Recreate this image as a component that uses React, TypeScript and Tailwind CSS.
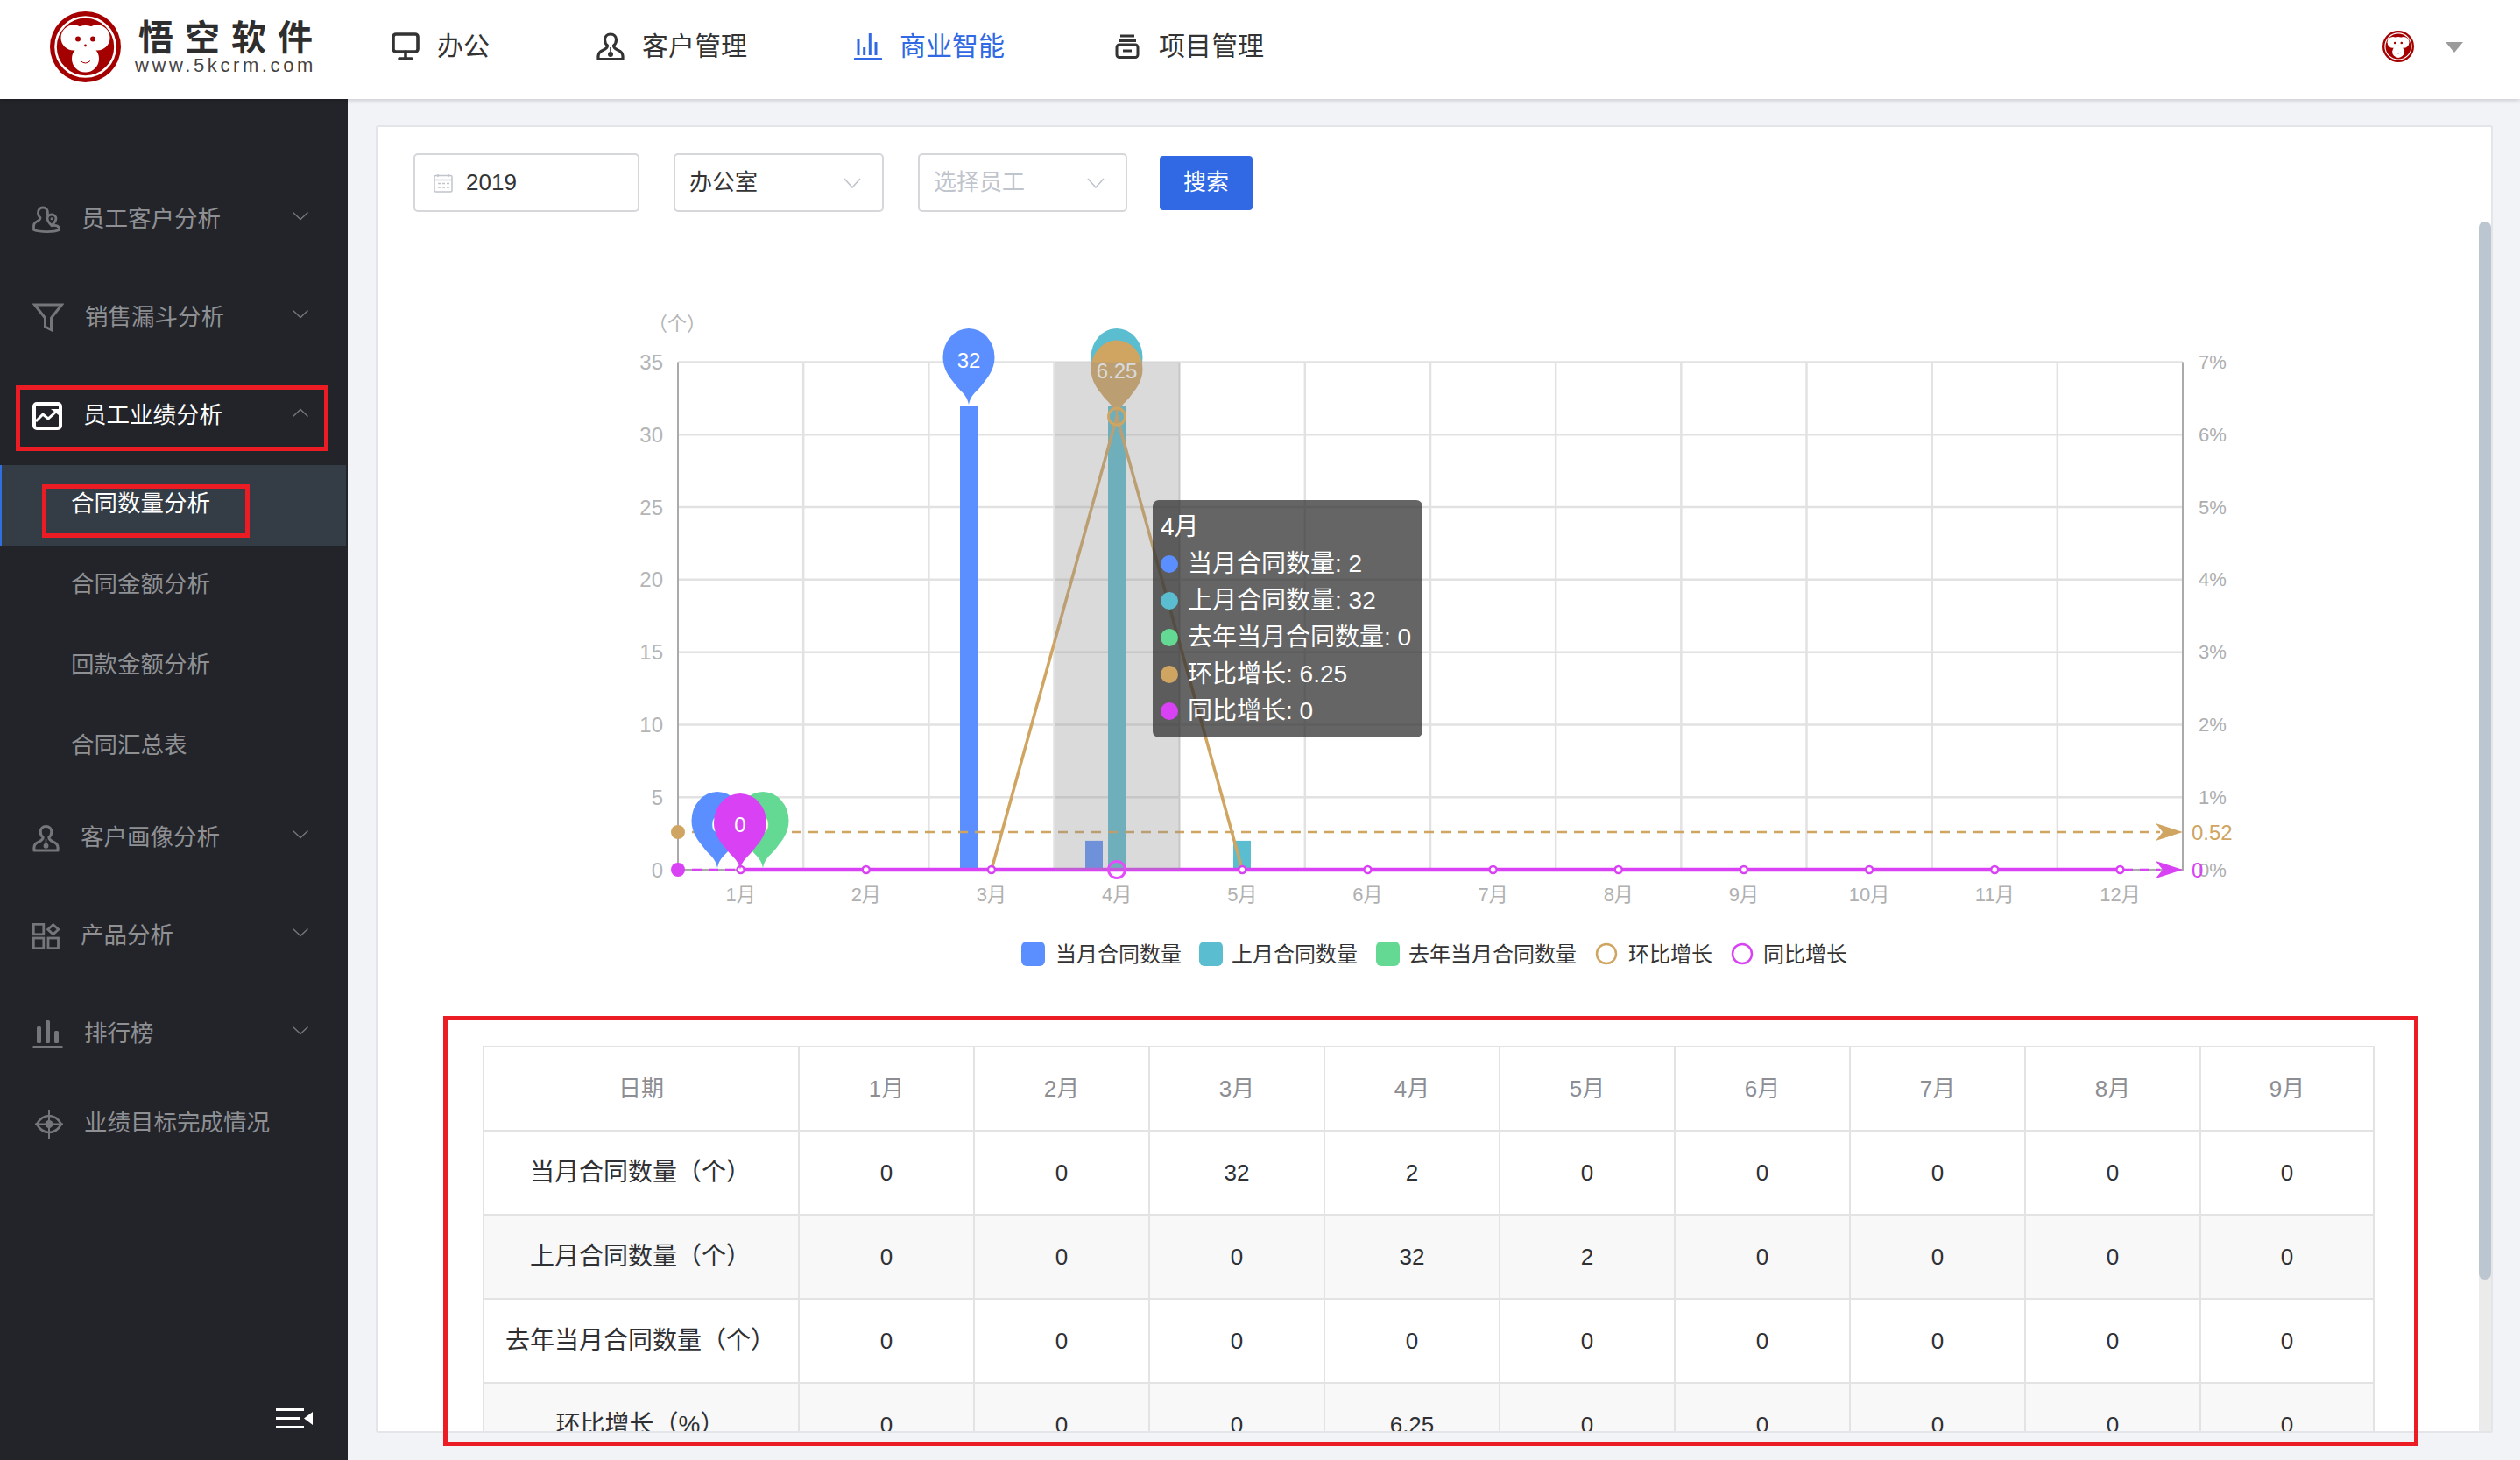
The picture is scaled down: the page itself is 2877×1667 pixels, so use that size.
import React from "react";

const months = ["1月","2月","3月","4月","5月","6月","7月","8月","9月","10月","11月","12月"];
const X0 = 774, X1 = 2492, Y0 = 993, YT = 413.5;
const CW = (X1 - X0) / 12;
const UH = (Y0 - YT) / 7;
const cx = (i: number) => X0 + CW * (i + 0.5);

function pinPath(x: number, y: number, w = 59) {
  const r = w / 2;
  return `M${x} ${y}C${x - 2} ${y - 12} ${x - 10} ${y - 15} ${x - 17} ${y - 25}C${x - r + 8} ${y - 31} ${x - r} ${y - 40} ${x - r} ${y - 54}A${r} 33 0 1 1 ${x + r} ${y - 54}C${x + r} ${y - 40} ${x + r - 8} ${y - 31} ${x + 17} ${y - 25}C${x + 10} ${y - 15} ${x + 2} ${y - 12} ${x} ${y}Z`;
}

const Monkey = ({ className }: { className: string }) => (
  <svg viewBox="0 0 81 81" className={className}>
    <circle cx="40.5" cy="40.5" r="40.5" fill="#a50000" />
    <circle cx="40.5" cy="40.5" r="34" fill="none" stroke="#fff" strokeWidth="2.6" />
    <circle cx="27" cy="30" r="14.5" fill="#fff" />
    <circle cx="54" cy="30" r="14.5" fill="#fff" />
    <ellipse cx="40.5" cy="30" rx="16" ry="14" fill="#fff" />
    <circle cx="40.5" cy="54" r="15.5" fill="#fff" />
    <circle cx="32" cy="31.5" r="3" fill="#a50000" />
    <circle cx="49" cy="31.5" r="3" fill="#a50000" />
    <circle cx="40.5" cy="39" r="1.4" fill="#a50000" />
    <path d="M35 56.5Q40.5 61.5 46 56.5" fill="none" stroke="#a50000" strokeWidth="1" />
  </svg>
);

const PersonIcon = ({ className, color }: { className: string; color: string }) => (
  <svg viewBox="0 0 32 32" className={className} fill="none" stroke={color} strokeWidth="3.2" strokeLinejoin="round">
    <path d="M16 2c-4 0-6.500 3-6.500 6.500 0 2.800 1 5 3 6.500 0 2.500-1.500 3.700-5 5.200C4 21.700 2 24 2 27v3.500h28V27c0-3-2-5.300-5.500-6.800-3.500-1.500-5-2.700-5-5.200 2-1.500 3-3.700 3-6.500C22.500 5 20 2 16 2z" />
    <path d="M16 17v5" strokeWidth="1.6" />
    <circle cx="16" cy="25" r="3" fill={color} stroke="none" />
  </svg>
);

const UserPinIcon = ({ className }: { className: string }) => (
  <svg viewBox="0 0 32 32" className={className} fill="none" stroke="#75767a" strokeWidth="2.800" strokeLinejoin="round">
    <path d="M12 2c-3.500 0-5.500 2.700-5.500 6 0 2.500 1 4.400 2.500 5.600 0 2.200-1.200 3.200-4 4.400C2.500 19.200 1.500 21 1.500 23v4.500C8 30 24 30.500 30.500 27.500V25c-1-2-4-3-8-2.500" />
    <path d="M12 2c3.500 0 5.500 2.700 5.500 6 0 1.500-.4 2.800-1 3.800" />
    <path d="M22 10c-3 0-5 2.200-5 4.800 0 3 3 5.200 5 8 2-2.800 5-5 5-8C27 12.200 25 10 22 10z" />
    <circle cx="22" cy="14.800" r="1.500" fill="#75767a" stroke="none" />
  </svg>
);

const FunnelIcon = ({ className }: { className: string }) => (
  <svg viewBox="0 0 36 34" className={className} fill="none" stroke="#75767a" strokeWidth="3" strokeLinejoin="miter">
    <path d="M2.500 2h31L21.500 17v13.500l-7-3.500V17z" />
  </svg>
);

const TrendIcon = ({ className }: { className: string }) => (
  <svg viewBox="0 0 34 32" className={className} fill="none" stroke="#fff">
    <rect x="2" y="2" width="30" height="28" rx="3" strokeWidth="4" />
    <path d="M4 22l8-8 6 5 9-8" strokeWidth="3" />
    <path d="M21 8h9v7z" fill="#fff" stroke="none" />
  </svg>
);

const ProductIcon = ({ className }: { className: string }) => (
  <svg viewBox="0 0 31 30" className={className} fill="none" stroke="#75767a" strokeWidth="2.800">
    <rect x="1.300" y="1.300" width="11.500" height="11.500" />
    <rect x="1.300" y="17" width="11.500" height="11.700" />
    <rect x="18" y="17" width="11.500" height="11.700" />
    <path d="M23.700 1.800l6 5.500-6 5.500-6-5.500z" />
  </svg>
);

const RankIcon = ({ className }: { className: string }) => (
  <svg viewBox="0 0 35 32" className={className} fill="#75767a">
    <rect x="5" y="7" width="5" height="19" rx="1.500" />
    <rect x="15" y="0" width="5" height="26" rx="1.500" />
    <rect x="25" y="12" width="5" height="14" rx="1.500" />
    <rect x="0" y="29" width="35" height="3" rx="1.500" />
  </svg>
);

const TargetIcon = ({ className }: { className: string }) => (
  <svg viewBox="0 0 35 33" className={className} fill="none" stroke="#75767a">
    <path d="M5 16.500C9 9.500 13 7 19 7S29 9.500 33 16.500C29 23.500 25 26 19 26S9 23.500 5 16.500z" strokeWidth="2.600" />
    <circle cx="19" cy="16.500" r="4.500" fill="#75767a" stroke="none" />
    <path d="M19 0v33M3 16.500h32" strokeWidth="2" />
  </svg>
);

const Chevron = ({ up = false }: { up?: boolean }) => (
  <svg viewBox="0 0 18 10" className="w-[18px] h-[10px]" fill="none" stroke="#77787c" strokeWidth="1.300">
    <path d={up ? "M0.500 9.500L9 1.500l8.500 8" : "M0.500 0.500L9 8.500l8.500-8"} />
  </svg>
);

const SelectChevron = () => (
  <svg viewBox="0 0 20 12" className="w-[20px] h-[12px]" fill="none" stroke="#c0c4cc" strokeWidth="1.600">
    <path d="M1 1l9 10 9-10" />
  </svg>
);

const NavItem = ({ icon, text, className }: { icon: React.ReactNode; text: string; className: string }) => (
  <div className={className}>
    {icon}
    <span className="text-[30px] leading-[40px]">{text}</span>
  </div>
);

const SideItem = ({ icon, text, box, active, up, noChevron, h }: { icon: React.ReactNode; text: string; box?: boolean; active?: boolean; up?: boolean; noChevron?: boolean; h: string }) => (
  <div className={h}>
    {icon}
    <span className={active ? "text-[26.5px] text-white" : "text-[26.5px] text-[#8f9094]"}>{text}</span>
    {!noChevron && (
      <span className="ml-auto mr-[45px] mb-[8px] flex">
        <Chevron up={up} />
      </span>
    )}
    {box && <div className="absolute left-[18px] top-[21px] w-[357px] h-[75px] border-[5px] border-[#ec1c24]" />}
  </div>
);

const rowH = "relative flex items-center h-[112px] pl-[37px] gap-[24px]";

function Chart() {
  const red = "#d941f5";
  const orange = "#cfa561";
  return (
    <svg viewBox="431 242 2398 950" className="block w-[2398px] h-[950px]">
      {Array.from({ length: 8 }).map((_, i) => (
        <line key={i} x1={X0} x2={X1} y1={Y0 - i * UH} y2={Y0 - i * UH} stroke="#e2e2e2" strokeWidth="2.500" />
      ))}
      {Array.from({ length: 11 }).map((_, i) => (
        <line key={i} x1={X0 + CW * (i + 1)} x2={X0 + CW * (i + 1)} y1={YT} y2={Y0} stroke="#e2e2e2" strokeWidth="2.500" />
      ))}
      <path d={`M${X0} ${YT}V${Y0}H${X1}V${YT}`} fill="none" stroke="#aaaaaa" strokeWidth="2" />
      {[0, 5, 10, 15, 20, 25, 30, 35].map((v, i) => (
        <text key={v} x="757" y={Y0 - i * UH} textAnchor="end" dominantBaseline="central" fontSize="24" fill="#b5b5b5">{v}</text>
      ))}
      {[0, 1, 2, 3, 4, 5, 6, 7].map((v, i) => (
        <text key={v} x="2510" y={Y0 - i * UH} dominantBaseline="central" fontSize="22" fill="#aeaeae">{v}%</text>
      ))}
      <text x="773" y="369" textAnchor="middle" dominantBaseline="central" fontSize="22" fill="#b5b5b5">（个）</text>
      {months.map((m, i) => (
        <text key={m} x={cx(i)} y="1021" textAnchor="middle" dominantBaseline="central" fontSize="22" fill="#b0b0b0">{m}</text>
      ))}
      <rect x="1096" y={Y0 - 32 * UH / 5} width="20" height={32 * UH / 5} fill="#5b8fff" />
      <rect x="1239" y={Y0 - 2 * UH / 5} width="20" height={2 * UH / 5} fill="#5b8fff" />
      <rect x="1265" y={Y0 - 32 * UH / 5} width="20" height={32 * UH / 5} fill="#5bbdd0" />
      <rect x="1408" y={Y0 - 2 * UH / 5} width="20" height={2 * UH / 5} fill="#5bbdd0" />
      <path d={`M${cx(2)} ${Y0}L${cx(3)} 475.600L${cx(4)} ${Y0}`} fill="none" stroke={orange} strokeWidth="3.500" />
      <line x1="790" x2="2466" y1="950" y2="950" stroke={orange} strokeWidth="2.500" strokeDasharray="11 8" />
      <circle cx={X0} cy="950" r="8" fill={orange} />
      <path d="M2492 950L2461 940 2469 950 2461 960Z" fill={orange} />
      <text x="2502" y="950" dominantBaseline="central" fontSize="24" fill={orange}>0.52</text>
      <line x1="790" x2="2466" y1={Y0} y2={Y0} stroke={red} strokeWidth="2.500" strokeDasharray="11 8" />
      <line x1={cx(0)} x2={cx(11)} y1={Y0} y2={Y0} stroke={red} strokeWidth="4.500" />
      <circle cx={X0} cy={Y0} r="8" fill={red} />
      <path d="M2492 993L2461 983 2469 993 2461 1003Z" fill={red} />
      <text x="2502" y={Y0} dominantBaseline="central" fontSize="24" fill={red}>0</text>
      {months.map((m, i) => (i === 3 ? null : (
        <circle key={m} cx={cx(i)} cy={Y0} r="4" fill="#fff" stroke={red} strokeWidth="2.500" />
      )))}
      <path d={pinPath(1106, 462)} fill="#5b8fff" />
      <text x="1106" y="411" textAnchor="middle" dominantBaseline="central" fontSize="24" fill="#fff">32</text>
      <path d={pinPath(1275, 462)} fill="#5bbdd0" />
      <path d={pinPath(819, 991)} fill="#5b8fff" />
      <text x="819" y="941" textAnchor="middle" dominantBaseline="central" fontSize="24" fill="#fff">0</text>
      <path d={pinPath(871, 991)} fill="#64d993" />
      <text x="871" y="941" textAnchor="middle" dominantBaseline="central" fontSize="24" fill="#fff">0</text>
      <path d={pinPath(845, 993, 60)} fill={red} />
      <text x="845" y="941" textAnchor="middle" dominantBaseline="central" fontSize="24" fill="#fff">0</text>
      <path d={pinPath(1275, 475.500)} fill={orange} />
      <text x="1275" y="423" textAnchor="middle" dominantBaseline="central" fontSize="24" fill="#fff">6.25</text>
      <rect x="1204" y={YT} width="143" height={Y0 - YT} fill="#969696" fillOpacity="0.35" />
      <circle cx="1275" cy="475.600" r="9.500" fill="none" stroke={orange} strokeWidth="3" />
      <circle cx="1275" cy={Y0} r="9.500" fill="none" stroke="#e34dfb" strokeWidth="3" />
      <rect x="1166" y="1075" width="27" height="28" rx="6" fill="#5b8fff" />
      <text x="1205" y="1089" dominantBaseline="central" fontSize="24" fill="#333">当月合同数量</text>
      <rect x="1369" y="1075" width="27" height="28" rx="6" fill="#5bbdd0" />
      <text x="1406" y="1089" dominantBaseline="central" fontSize="24" fill="#333">上月合同数量</text>
      <rect x="1571" y="1075" width="27" height="28" rx="6" fill="#64d993" />
      <text x="1608" y="1089" dominantBaseline="central" fontSize="24" fill="#333">去年当月合同数量</text>
      <circle cx="1834" cy="1089" r="11" fill="#fff" stroke={orange} strokeWidth="2.500" />
      <text x="1859" y="1089" dominantBaseline="central" fontSize="24" fill="#333">环比增长</text>
      <circle cx="1989" cy="1089" r="11" fill="#fff" stroke={red} strokeWidth="2.500" />
      <text x="2013" y="1089" dominantBaseline="central" fontSize="24" fill="#333">同比增长</text>
    </svg>
  );
}

const tipRows: [string, string][] = [
  ["bg-[#5b8fff]", "当月合同数量: 2"],
  ["bg-[#5bbdd0]", "上月合同数量: 32"],
  ["bg-[#64d993]", "去年当月合同数量: 0"],
  ["bg-[#cfa561]", "环比增长: 6.25"],
  ["bg-[#d941f5]", "同比增长: 0"],
];

const headers = ["日期", "1月", "2月", "3月", "4月", "5月", "6月", "7月", "8月", "9月"];
const rows: string[][] = [
  ["当月合同数量（个）", "0", "0", "32", "2", "0", "0", "0", "0", "0"],
  ["上月合同数量（个）", "0", "0", "0", "32", "2", "0", "0", "0", "0"],
  ["去年当月合同数量（个）", "0", "0", "0", "0", "0", "0", "0", "0", "0"],
  ["环比增长（%）", "0", "0", "0", "6.25", "0", "0", "0", "0", "0"],
];

export default function App() {
  return (
    <div className="flex flex-col w-[2877px] h-[1667px] overflow-hidden bg-[#f2f3f7] font-['Liberation_Sans','Noto_Sans_CJK_SC',sans-serif]">
      <header className="relative z-10 flex items-center shrink-0 h-[113px] bg-white pl-[57px] pr-[65px] text-[#333] shadow-[0_2px_5px_rgba(0,0,0,0.16)]">
        <div className="flex items-center w-[300px] gap-[16px]">
          <Monkey className="w-[81px] h-[81px] shrink-0 mt-[-7px]" />
          <div className="flex flex-col mb-[5px]">
            <span className="text-[40px] leading-[42px] font-bold tracking-[13px] text-[#2e2e2e] whitespace-nowrap pl-[4px]">悟空软件</span>
            <span className="text-[22px] leading-[22px] tracking-[3.6px] text-[#444] whitespace-nowrap">www.5kcrm.com</span>
          </div>
        </div>
        <nav className="flex items-center gap-[122px] ml-[90px] mb-[8px]">
          <NavItem
            className="flex items-center gap-[20px]"
            text="办公"
            icon={
              <svg viewBox="0 0 32 32" className="w-[32px] h-[32px]" fill="none" stroke="#333" strokeWidth="3.600">
                <rect x="2" y="2" width="28" height="20" rx="3" />
                <path d="M16 22v7M9 30h14" strokeLinecap="round" />
              </svg>
            }
          />
          <NavItem className="flex items-center gap-[20px]" text="客户管理" icon={<PersonIcon className="w-[32px] h-[32px]" color="#333" />} />
          <NavItem
            className="flex items-center gap-[20px] text-[#3069e3]"
            text="商业智能"
            icon={
              <svg viewBox="0 0 32 32" className="w-[32px] h-[32px]" fill="none" stroke="#3069e3" strokeWidth="3">
                <path d="M5 7v19M11.700 17v9M18.300 1v25M25 11v15" />
                <path d="M1 30.500h30" strokeWidth="3" strokeLinecap="round" />
              </svg>
            }
          />
          <NavItem
            className="flex items-center gap-[20px] ml-[4px]"
            text="项目管理"
            icon={
              <svg viewBox="0 0 28 28" className="w-[28px] h-[28px] mr-[2px]" fill="none" stroke="#333" strokeWidth="3">
                <path d="M6 2h16M4 7.500h20" />
                <rect x="2" y="12" width="24" height="14.500" rx="3" />
                <path d="M9 19h10" />
              </svg>
            }
          />
        </nav>
        <div className="ml-auto flex items-center gap-[36px] mb-[8px]">
          <Monkey className="w-[36px] h-[36px]" />
          <div className="w-0 h-0 border-l-[10px] border-r-[10px] border-t-[12px] border-l-transparent border-r-transparent border-t-[#9b9b9b] mt-[2px]" />
        </div>
      </header>

      <div className="flex flex-1 min-h-0">
        <aside className="relative w-[397px] shrink-0 bg-[#222429] pt-[82px]">
          <SideItem h={rowH} icon={<UserPinIcon className="w-[32px] h-[32px]" />} text="员工客户分析" />
          <SideItem h={rowH} icon={<FunnelIcon className="w-[36px] h-[34px]" />} text="销售漏斗分析" />
          <SideItem h={rowH} icon={<TrendIcon className="w-[34px] h-[32px]" />} text="员工业绩分析" active up box />
          <div className="relative flex items-center w-[395px] h-[92px] pl-[79px] pb-[3px] bg-[#343c46] border-l-2 border-[#2f6fe0] text-[26.5px] text-white">
            合同数量分析
            <div className="absolute left-[46px] top-[22px] w-[237px] h-[61px] border-[5px] border-[#ec1c24]" />
          </div>
          <div className="flex items-center h-[92px] pl-[81px] pb-[3px] text-[26.5px] text-[#8f9094]">合同金额分析</div>
          <div className="flex items-center h-[92px] pl-[81px] pb-[3px] text-[26.5px] text-[#8f9094]">回款金额分析</div>
          <div className="flex items-center h-[94px] pl-[81px] pb-[5px] text-[26.5px] text-[#8f9094]">合同汇总表</div>
          <SideItem h={rowH} icon={<PersonIcon className="w-[31px] h-[32px]" color="#75767a" />} text="客户画像分析" />
          <SideItem h={rowH} icon={<ProductIcon className="w-[31px] h-[30px]" />} text="产品分析" />
          <SideItem h={rowH} icon={<RankIcon className="w-[35px] h-[32px]" />} text="排行榜" />
          <SideItem h="relative flex items-center h-[92px] pl-[37px] gap-[24px]" icon={<TargetIcon className="w-[35px] h-[33px]" />} text="业绩目标完成情况" noChevron />
          <svg viewBox="0 0 42 23" className="absolute left-[315px] bottom-[36px] w-[42px] h-[23px]" fill="#fff">
            <rect x="0" y="0" width="32" height="3" />
            <rect x="0" y="10" width="28" height="3" />
            <rect x="0" y="20" width="32" height="3" />
            <path d="M42 4v15L32 11.500z" />
          </svg>
        </aside>

        <main className="relative flex-1 min-w-0 pl-[32px] pr-[31px] pt-[30px] pb-[31px]">
          <div className="relative h-full bg-white border-2 border-[#e4e5e9] rounded-[3px] overflow-hidden">
            <div className="flex items-center h-[67px] mt-[30px] ml-[41px] text-[26px] text-[#333]">
              <div className="flex items-center w-[258px] h-[67px] pl-[21px] gap-[15px] border-2 border-[#d6d7da] rounded-[5px]">
                <svg viewBox="0 0 22 22" className="w-[22px] h-[22px]" fill="none" stroke="#c0c4cc" strokeWidth="1.500">
                  <rect x="1" y="2.500" width="20" height="18.500" rx="1.500" />
                  <path d="M1 7.500h20M5 1v3M17 1v3M5 11.500h3M10 11.500h3M15 11.500h3M5 16h3M10 16h3M15 16h3" />
                </svg>
                <span>2019</span>
              </div>
              <div className="flex items-center justify-between w-[240px] h-[67px] ml-[39px] pl-[16px] pr-[24px] border-2 border-[#d6d7da] rounded-[5px]">
                <span>办公室</span>
                <SelectChevron />
              </div>
              <div className="flex items-center justify-between w-[239px] h-[67px] ml-[39px] pl-[16px] pr-[24px] border-2 border-[#d6d7da] rounded-[5px] text-[#c0c4cc]">
                <span>选择员工</span>
                <SelectChevron />
              </div>
              <div className="flex items-center justify-center w-[106px] h-[62px] ml-[37px] bg-[#3069e3] rounded-[4px] text-white">搜索</div>
            </div>

            <div className="relative">
              <Chart />
              <div className="absolute left-[885px] top-[329px] w-[308px] h-[271px] pt-[10px] pl-[9px] bg-[rgba(50,50,50,0.75)] rounded-[7px] text-[28px] leading-[42px] text-white whitespace-nowrap">
                <div>4月</div>
                {tipRows.map(([c, t]) => (
                  <div key={t} className="flex items-center gap-[11px]">
                    <span className={c + " w-[20px] h-[20px] rounded-full shrink-0"} />
                    <span>{t}</span>
                  </div>
                ))}
              </div>
            </div>

            <table className="table-fixed w-[2158px] ml-[120px] mt-[2px] border-collapse text-[26px] text-[#2f3033] text-center">
              <colgroup>
                <col className="w-[360px]" />
                <col className="w-[200px]" />
                <col className="w-[200px]" />
                <col className="w-[200px]" />
                <col className="w-[200px]" />
                <col className="w-[200px]" />
                <col className="w-[200px]" />
                <col className="w-[200px]" />
                <col className="w-[200px]" />
                <col className="w-[198px]" />
              </colgroup>
              <thead>
                <tr>
                  {headers.map((h) => (
                    <th key={h} className="h-[96px] border-2 border-[#e3e3e3] font-normal text-[#8c8e94]">{h}</th>
                  ))}
                </tr>
              </thead>
              <tbody>
                {rows.map((r, i) => (
                  <tr key={r[0]} className={i % 2 === 1 ? "bg-[#f8f8f9]" : "bg-white"}>
                    {r.map((c, j) => (
                      <td key={j} className={j === 0 ? "h-[96px] border-2 border-[#e3e3e3] pr-[2px] text-[28px]" : "h-[96px] border-2 border-[#e3e3e3]"}>{c}</td>
                    ))}
                  </tr>
                ))}
              </tbody>
            </table>

            <div className="absolute right-0 top-[108px] bottom-0 w-[14px] bg-[#ebebeb] rounded-t-[6px]">
              <div className="h-[1208px] bg-[#bcc6d0] rounded-[7px]" />
            </div>
          </div>
          <div className="absolute left-[109px] top-[1047px] w-[2255px] h-[491px] border-[5px] border-[#ec1c24]" />
        </main>
      </div>
    </div>
  );
}
